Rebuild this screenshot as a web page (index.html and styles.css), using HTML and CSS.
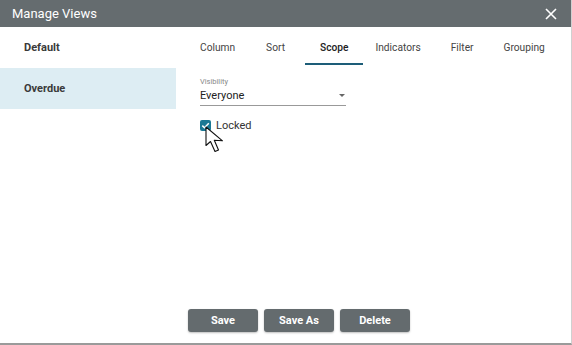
FILE: index.html
```html
<!DOCTYPE html>
<html lang="en">
<head>
    <meta charset="UTF-8">
    <title>Manage Views</title>
    <link rel="stylesheet" href="styles.css">
</head>
<body>
    <div class="dialog">
        <header class="dialog-header">
            <span class="dialog-title">Manage Views</span>
            <svg class="close" width="12" height="12" viewBox="0 0 12 12"><path d="M1 1 L11 11 M11 1 L1 11" stroke="#fff" stroke-width="1.6"/></svg>
        </header>
        <div class="dialog-body">
            <aside class="views">
                <div class="view">Default</div>
                <div class="view active">Overdue</div>
            </aside>
            <main class="content">
                <nav class="tabs">
                    <a>Column</a>
                    <a>Sort</a>
                    <a class="selected">Scope</a>
                    <a>Indicators</a>
                    <a>Filter</a>
                    <a>Grouping</a>
                </nav>
                <div class="field">
                    <label>Visibility</label>
                    <div class="select">Everyone<span class="caret"></span></div>
                </div>
                <div class="check">
                    <span class="box">
                        <svg width="11" height="11" viewBox="0 0 11 11"><path d="M2.3 5.6 L4.5 7.8 L8.8 3.3" fill="none" stroke="#fff" stroke-width="1.5"/></svg>
                    </span>
                    Locked
                    <svg class="cursor" width="22" height="28" viewBox="0 0 22 28"><path d="M1 1 L1 19.5 L5.5 15.5 L10 25.5 L13.5 24 L9.3 14.3 L17.5 14.8 Z" fill="#fff" stroke="#111" stroke-width="1.1" stroke-linejoin="round"/></svg>
                </div>
            </main>
        </div>
        <footer class="actions">
            <button>Save</button>
            <button>Save As</button>
            <button>Delete</button>
        </footer>
    </div>
</body>
</html>
```

FILE: styles.css
```css
body { margin: 0; font-family: Roboto, "Liberation Sans", sans-serif; background: #fff; }
.dialog { width: 571px; height: 343px; border-right: 1px solid #d0d0d0; border-bottom: 2px solid #9a9a9a; display: flex; flex-direction: column; color: #333; }
.dialog-header { height: 27px; background: #656c6f; color: #fff; display: flex; align-items: center; justify-content: space-between; padding: 0 14px 0 12px; }
.dialog-title { font-size: 13px; }
.close { display: block; }
.dialog-body { flex: 1; display: flex; }
.views { width: 176px; }
.view { height: 41px; line-height: 41px; padding-left: 24px; font-size: 11px; font-weight: 700; color: #3a3a3a; }
.view.active { background: #ddedf3; }
.content { flex: 1; padding-left: 9px; position: relative; }
.tabs { display: flex; height: 38px; margin-bottom: 12px; }
.tabs a { padding: 0 15px; font-size: 10.2px; color: #444; line-height: 42px; border-bottom: 2px solid transparent; margin-right: 0; }
.tabs a:nth-child(1) { margin-right: 1px; }
.tabs a:nth-child(2) { margin-right: 5px; }
.tabs a:nth-child(3) { margin-right: -3px; }
.tabs a.selected { border-bottom-color: #1d5d78; color: #222; font-weight: 500; }
.field { width: 146px; margin-left: 15px; }
.field label { display: block; font-size: 7.5px; color: #888; margin-bottom: 3px; }
.select { font-size: 11px; color: #222; padding-bottom: 3px; border-bottom: 1px solid #999; position: relative; }
.caret { position: absolute; right: 1px; top: 5px; border-left: 3px solid transparent; border-right: 3px solid transparent; border-top: 3px solid #666; }
.check { display: flex; align-items: center; gap: 5px; margin: 13px 0 0 15px; font-size: 11px; color: #333; position: relative; }
.box { width: 11px; height: 11px; background: #1a7894; border-radius: 2px; display: flex; }
.cursor { position: absolute; left: 5px; top: 7px; }
.actions { height: 34px; display: flex; gap: 6px; padding-left: 188px; align-items: flex-start; }
.actions button { width: 70px; height: 23px; background: #646b6e; color: #fff; border: none; border-radius: 3px; font-family: inherit; font-size: 11px; font-weight: 700; box-shadow: 0 1px 2px rgba(0,0,0,0.25); }
```
